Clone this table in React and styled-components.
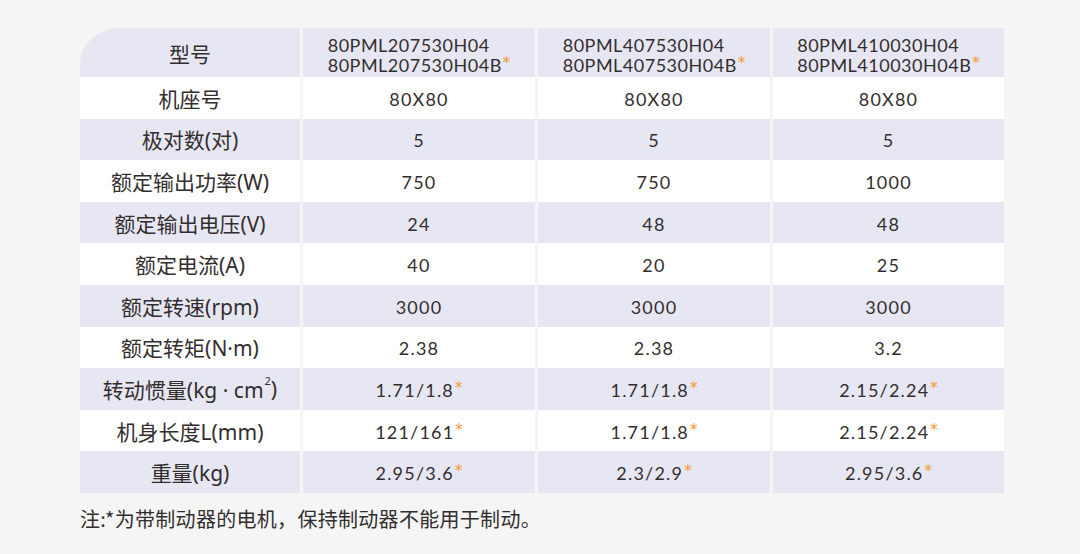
import React from "react";
import styled, { createGlobalStyle } from "styled-components";

const GlobalStyle = createGlobalStyle`
  html, body {
    margin: 0;
    padding: 0;
    background: #f5f5f5;
  }
  body {
    font-family: "Noto Sans CJK SC", "Noto Sans", sans-serif;
    color: #332e2e;
  }
`;

const Page = styled.div`
  width: 1080px;
  height: 554px;
  box-sizing: border-box;
  padding: 28px 0 0 80px;
  background: #f5f5f5;
`;

const Table = styled.div`
  width: 924px;
  display: flex;
  flex-direction: column;
`;

const Row = styled.div`
  display: grid;
  grid-template-columns: 220px 232px 232px 231px;
  column-gap: 3px;
  height: ${(p) => (p.$head ? "49px" : "41.6px")};
`;

const Cell = styled.div`
  display: flex;
  align-items: center;
  justify-content: center;
  background: ${(p) => (p.$shade ? "#e7e7f3" : "#ffffff")};
  border-top-left-radius: ${(p) => (p.$corner ? "40px 36px" : "0")};
  font-family: ${(p) =>
    p.$label
      ? `"Noto Sans", "Noto Sans CJK SC", sans-serif`
      : `Lato, "Noto Sans CJK SC", sans-serif`};
  font-size: ${(p) => (p.$label ? "21px" : "18px")};
  letter-spacing: ${(p) => (p.$label ? "0" : "1.2px")};
  padding-top: ${(p) => (p.$label ? "0" : "2px")};
  box-sizing: border-box;
`;

const ModelBlock = styled.div`
  text-align: left;
  font-family: Lato, sans-serif;
  font-size: 18px;
  line-height: 20px;
  letter-spacing: 0.5px;
  padding-top: 3px;
`;

const Star = styled.span`
  display: inline-block;
  color: #f39a2e;
  font-family: "DejaVu Sans", sans-serif;
  font-size: 15px;
  line-height: 0;
  position: relative;
  top: -4px;
  margin-left: 1px;
  letter-spacing: 0;
`;

const Sup = styled.span`
  display: inline-block;
  font-size: 11px;
  line-height: 0;
  position: relative;
  top: -8px;
  margin-left: 1px;
`;

const Note = styled.p`
  margin: 12px 0 0;
  font-size: 20px;
  line-height: 28px;
  letter-spacing: 0.3px;
  color: #332e2e;
`;

const models = [
  ["80PML207530H04", "80PML207530H04B"],
  ["80PML407530H04", "80PML407530H04B"],
  ["80PML410030H04", "80PML410030H04B"],
];

const rows = [
  { label: "机座号", values: ["80X80", "80X80", "80X80"] },
  { label: "极对数(对)", values: ["5", "5", "5"] },
  { label: "额定输出功率(W)", values: ["750", "750", "1000"] },
  { label: "额定输出电压(V)", values: ["24", "48", "48"] },
  { label: "额定电流(A)", values: ["40", "20", "25"] },
  { label: "额定转速(rpm)", values: ["3000", "3000", "3000"] },
  { label: "额定转矩(N·m)", values: ["2.38", "2.38", "3.2"] },
  {
    label: (
      <>
        转动惯量(kg · cm<Sup>2</Sup>)
      </>
    ),
    values: ["1.71/1.8*", "1.71/1.8*", "2.15/2.24*"],
  },
  { label: "机身长度L(mm)", values: ["121/161*", "1.71/1.8*", "2.15/2.24*"] },
  { label: "重量(kg)", values: ["2.95/3.6*", "2.3/2.9*", "2.95/3.6*"] },
];

const Value = ({ text }) =>
  text.endsWith("*") ? (
    <span>
      {text.slice(0, -1)}
      <Star>*</Star>
    </span>
  ) : (
    <span>{text}</span>
  );

export default function App() {
  return (
    <Page>
      <GlobalStyle />
      <Table>
        <Row $head>
          <Cell $shade $label $corner>
            型号
          </Cell>
          {models.map(([a, b]) => (
            <Cell $shade key={a}>
              <ModelBlock>
                <div>{a}</div>
                <div>
                  {b}
                  <Star>*</Star>
                </div>
              </ModelBlock>
            </Cell>
          ))}
        </Row>
        {rows.map((r, i) => {
          const shade = i % 2 === 1;
          return (
            <Row key={i}>
              <Cell $shade={shade} $label>
                {r.label}
              </Cell>
              {r.values.map((v, j) => (
                <Cell $shade={shade} key={j}>
                  <Value text={v} />
                </Cell>
              ))}
            </Row>
          );
        })}
      </Table>
      <Note>注:*为带制动器的电机，保持制动器不能用于制动。</Note>
    </Page>
  );
}
